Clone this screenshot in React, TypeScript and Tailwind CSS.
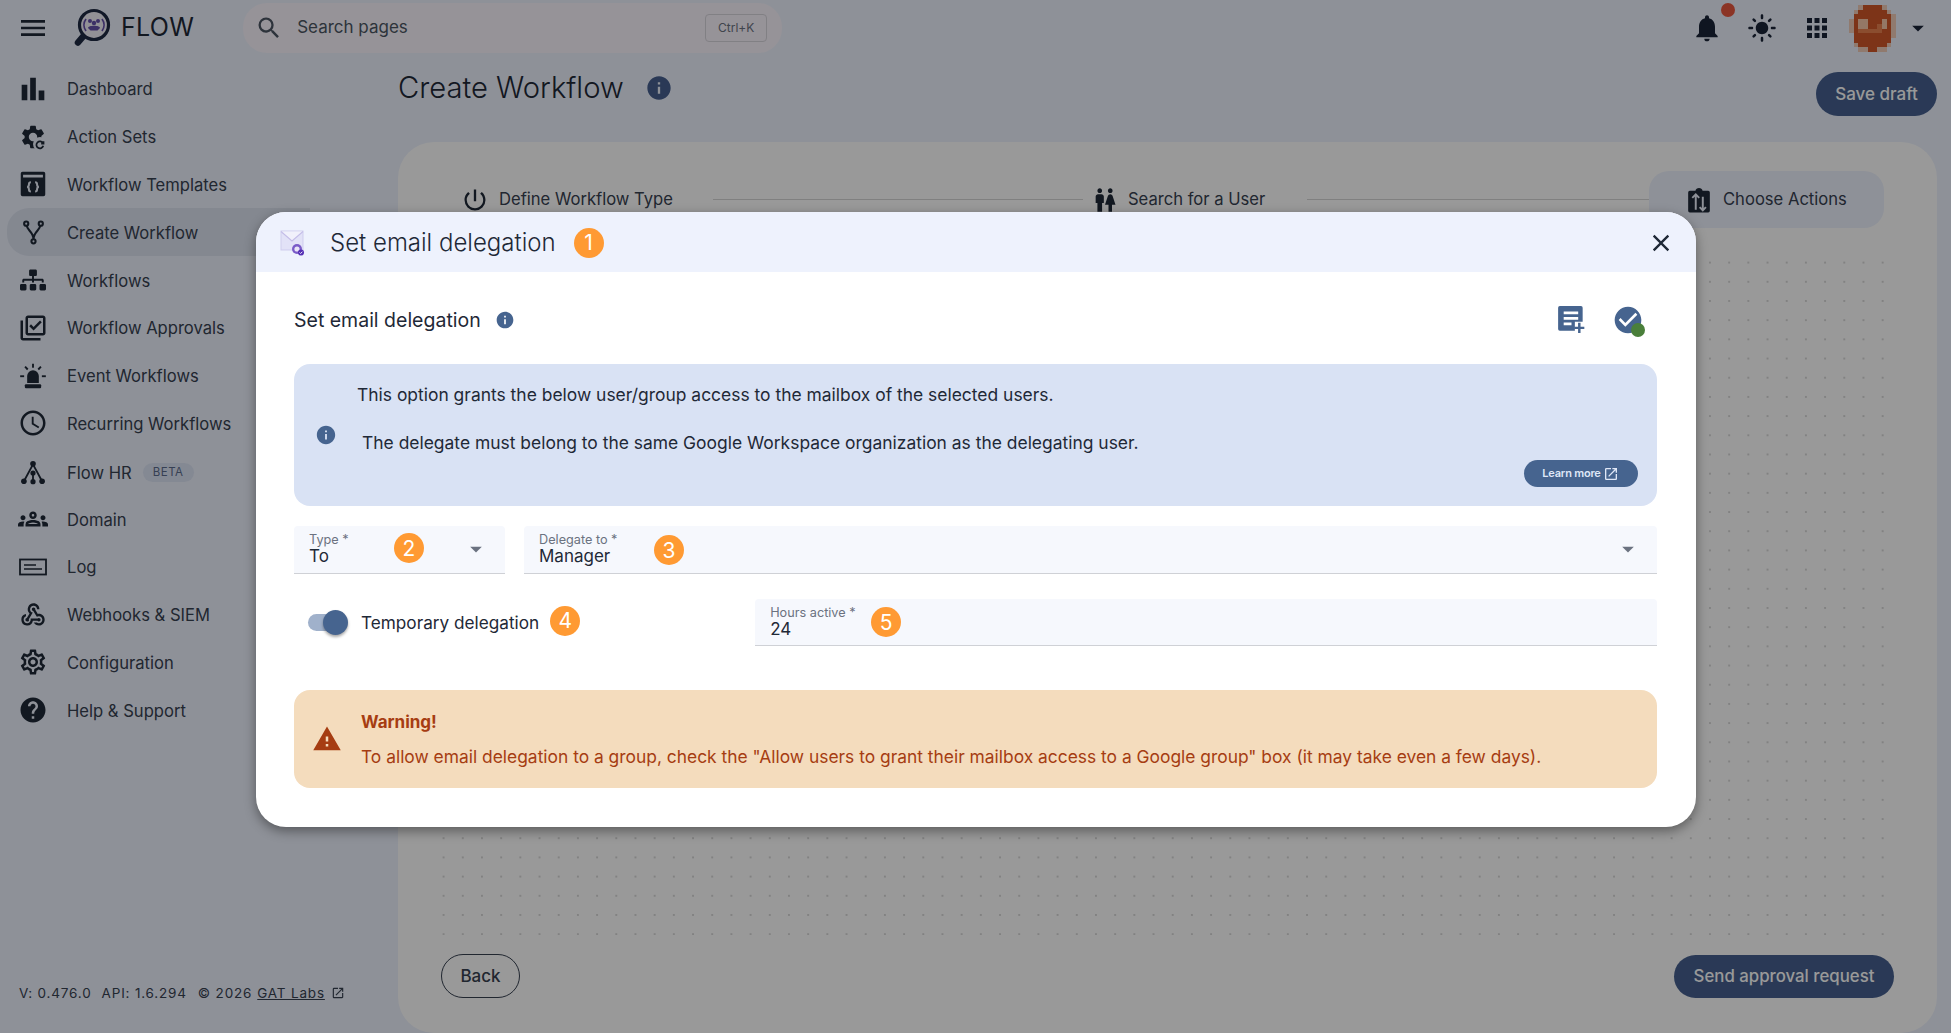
import React from "react";
import {
  MdMenu, MdBarChart, MdOutlineLibraryAddCheck, MdAccessTime, MdOutlineGroups, MdOutlineWebhook, MdOutlineSettings,
  MdHelp, MdOpenInNew, MdPowerSettingsNew, MdWc, MdNotifications, MdLightMode, MdApps, MdArrowDropDown, MdSearch,
  MdClose, MdInfo, MdCheckCircle, MdWarning,
} from "react-icons/md";
import { FaSitemap } from "react-icons/fa";

type IconProps = { className?: string };

const ActionSetsIcon = ({ className }: IconProps) => (
  <svg viewBox="0 0 24 24" className={className} fill="currentColor">
    <path d="M19.14 12.94c.04-.3.06-.61.06-.94s-.02-.64-.07-.94l2.03-1.58a.49.49 0 0 0 .12-.61l-1.92-3.32a.49.49 0 0 0-.59-.22l-2.39.96c-.5-.38-1.03-.7-1.62-.94L14.4 2.81a.48.48 0 0 0-.48-.41h-3.84a.48.48 0 0 0-.47.41l-.36 2.54c-.59.24-1.13.57-1.62.94l-2.39-.96a.48.48 0 0 0-.59.22L2.74 8.87a.47.47 0 0 0 .12.61l2.03 1.58c-.05.3-.09.63-.09.94s.02.64.07.94l-2.03 1.58a.49.49 0 0 0-.12.61l1.92 3.32c.12.22.37.29.59.22l2.39-.96c.5.38 1.03.7 1.62.94l.36 2.54c.05.24.24.41.48.41h3.84c.24 0 .44-.17.47-.41l.36-2.54c.59-.24 1.13-.56 1.62-.94l2.39.96c.22.08.47 0 .59-.22l1.92-3.32a.47.47 0 0 0-.12-.61zM12 15.6A3.6 3.6 0 1 1 12 8.4a3.6 3.6 0 0 1 0 7.2z" />
    <circle cx="18" cy="18" r="6" fill="#edf2fe" />
    <path d="M21 15.6v2h-2M20.6 17.4a3 3 0 1 0 .2 2.2" fill="none" stroke="currentColor" strokeWidth="1.5" />
  </svg>
);

const TemplatesIcon = ({ className }: IconProps) => (
  <svg viewBox="0 0 24 24" className={className} fill="currentColor">
    <path fillRule="evenodd" d="M3 1.5h18A1.5 1.5 0 0 1 22.5 3v18a1.5 1.5 0 0 1-1.5 1.5H3A1.5 1.5 0 0 1 1.5 21V3A1.5 1.5 0 0 1 3 1.5zM3.5 4v2.5h17V4z" />
    <path d="M10.2 10.5c-1.6 0-1.7.8-1.7 2s-.2 2-1.6 2c1.4 0 1.6.8 1.6 2s.1 2 1.7 2M13.8 10.5c1.6 0 1.7.8 1.7 2s.2 2 1.6 2c-1.4 0-1.6.8-1.6 2s-.1 2-1.7 2" fill="none" stroke="#edf2fe" strokeWidth="1.7" />
  </svg>
);

const ForkIcon = ({ className }: IconProps) => (
  <svg viewBox="0 0 24 24" className={className} fill="none" stroke="currentColor" strokeWidth="2">
    <circle cx="5" cy="3.5" r="2" />
    <circle cx="19" cy="3.5" r="2" />
    <circle cx="12" cy="20.5" r="2" />
    <path d="M5.5 5.5c.5 4.5 6.5 6 6.5 13M18.5 5.5c-.5 4.5-6.5 6-6.5 13" />
  </svg>
);

const SirenIcon = ({ className }: IconProps) => (
  <svg viewBox="0 0 24 24" className={className} fill="currentColor">
    <path d="M7 18v-6a5 5 0 0 1 10 0v6z" />
    <rect x="5" y="19" width="14" height="3.4" rx="1" />
    <rect x="11.2" y="1.5" width="1.6" height="3.4" />
    <rect x="1" y="11.4" width="3.4" height="1.6" />
    <rect x="19.6" y="11.4" width="3.4" height="1.6" />
    <path d="M4.6 4.6l1.2-1.1 2.3 2.3-1.2 1.2zM19.4 4.6l-1.2-1.1-2.3 2.3 1.2 1.2z" />
  </svg>
);

const HrIcon = ({ className }: IconProps) => (
  <svg viewBox="0 0 24 24" className={className} fill="currentColor">
    <circle cx="12" cy="3.5" r="2.6" />
    <circle cx="12" cy="12" r="2.4" />
    <circle cx="3.6" cy="19.6" r="2.6" />
    <circle cx="12" cy="20" r="2.4" />
    <circle cx="20.4" cy="19.6" r="2.6" />
    <path d="M12 4L3.6 19.6M12 4l8.4 15.6M12 12v8" fill="none" stroke="currentColor" strokeWidth="1.7" />
  </svg>
);

const LogIcon = ({ className }: IconProps) => (
  <svg viewBox="0 0 28 18" className={className} fill="none" stroke="currentColor" strokeWidth="1.8">
    <rect x="1" y="1.5" width="26" height="15" />
    <path d="M5 7h12M5 11h18" strokeWidth="1.5" />
  </svg>
);

const ChooseActionsIcon = ({ className }: IconProps) => (
  <svg viewBox="0 0 24 24" className={className} fill="currentColor">
    <path d="M3.5 3.5h5.2a3.4 3.4 0 0 1 6.6 0h5.2A1.5 1.5 0 0 1 22 5v17a1.5 1.5 0 0 1-1.5 1.5h-17A1.5 1.5 0 0 1 2 22V5a1.5 1.5 0 0 1 1.5-1.5z" />
    <path d="M9 21V7M5.8 10L9 6.8l3.2 3.2M15.5 9v13M12.6 18.6l2.9 3 2.9-3" fill="none" stroke="#edf2fe" strokeWidth="1.8" />
  </svg>
);

const NoteAddIcon = ({ className }: IconProps) => (
  <svg viewBox="0 0 26 26" className={className}>
    <path fill="#46648f" d="M2.5 1h19A1.5 1.5 0 0 1 23 2.5V15h-7v8H2.5A1.5 1.5 0 0 1 1 21.5v-19A1.5 1.5 0 0 1 2.5 1z" />
    <path d="M6 7h13M6 12h13M6 17h7" stroke="#fff" strokeWidth="2.4" />
    <path d="M20 16v9M15.5 20.5h9" stroke="#46648f" strokeWidth="2.2" />
  </svg>
);

const MailIcon = ({ className }: IconProps) => (
  <svg viewBox="0 0 26 28" className={className}>
    <rect x="1" y="2" width="22" height="19" fill="#e2e2f7" stroke="#cfcdee" />
    <path d="M1 2.5l11 9.5 11-9.5" fill="#f1f1fb" stroke="#c4bde8" strokeWidth="1.1" />
    <circle cx="17" cy="20" r="5" fill="#7a5bc8" />
    <circle cx="17" cy="20" r="2.6" fill="#e9e4f8" />
    <circle cx="21" cy="23.5" r="3" fill="#5530b5" />
    <path d="M19.6 23.5l1 1 1.8-1.8" stroke="#fff" fill="none" strokeWidth="0.9" />
  </svg>
);

const FlowLogo = ({ className }: IconProps) => (
  <svg viewBox="0 0 40 40" className={className}>
    <path d="M10.5 28L5 34.5" stroke="#1f2a44" strokeWidth="6.5" strokeLinecap="round" />
    <circle cx="21" cy="17" r="14.5" fill="#f4f2fa" stroke="#1f2a44" strokeWidth="3.2" />
    <path d="M13 11a10 10 0 0 0 0 12M29 11a10 10 0 0 1 0 12" stroke="#6550ab" strokeWidth="1.8" fill="none" />
    <circle cx="17" cy="13" r="2" fill="#6550ab" />
    <circle cx="25" cy="13" r="2" fill="#6550ab" />
    <circle cx="21" cy="15" r="2.2" fill="#6550ab" />
    <path d="M15 20c0-3 12-3 12 0l-2.5 2.5h-7z" fill="#6550ab" />
  </svg>
);

const avatarRows = [
  "..eMMMMe..",
  ".eMMMMMMe.",
  ".MMMMMMMMe",
  "eMLLMMMLMe",
  "eMLLMMlLMe",
  "eMlllllMMe",
  ".MMMMMMMMe",
  ".MMMMMMMM.",
  ".eMMMMMMe.",
  "..eeMMee..",
];
const avatarColours: Record<string, string> = { e: "#f0cbb8", M: "#d05828", L: "#f7c9ab", l: "#e8814f" };

const Avatar = () => (
  <svg viewBox="0 0 10 10" className="h-[47px] w-[47px]" shapeRendering="crispEdges">
    {avatarRows.flatMap((row, y) =>
      row.split("").map((c, x) => (c === "." ? null : <rect key={`${x}-${y}`} x={x} y={y} width="1" height="1" fill={avatarColours[c]} />)),
    )}
  </svg>
);

const navItems: { label: string; icon: React.ReactNode; active?: boolean; beta?: boolean }[] = [
  { label: "Dashboard", icon: <MdBarChart className="h-[34px] w-[34px]" /> },
  { label: "Action Sets", icon: <ActionSetsIcon className="h-7 w-7" /> },
  { label: "Workflow Templates", icon: <TemplatesIcon className="h-7 w-7" /> },
  { label: "Create Workflow", icon: <ForkIcon className="h-[25px] w-[25px]" />, active: true },
  { label: "Workflows", icon: <FaSitemap className="h-[24px] w-[26px]" /> },
  { label: "Workflow Approvals", icon: <MdOutlineLibraryAddCheck className="h-[30px] w-[30px]" /> },
  { label: "Event Workflows", icon: <SirenIcon className="h-7 w-7" /> },
  { label: "Recurring Workflows", icon: <MdAccessTime className="h-[30px] w-[30px]" /> },
  { label: "Flow HR", icon: <HrIcon className="h-[26px] w-[28px]" />, beta: true },
  { label: "Domain", icon: <MdOutlineGroups className="h-[30px] w-[30px]" /> },
  { label: "Log", icon: <LogIcon className="h-[18px] w-7" /> },
  { label: "Webhooks & SIEM", icon: <MdOutlineWebhook className="h-7 w-7" /> },
  { label: "Configuration", icon: <MdOutlineSettings className="h-[30px] w-[30px]" /> },
  { label: "Help & Support", icon: <MdHelp className="h-[30px] w-[30px]" /> },
];

const Badge = ({ n, className }: { n: number; className?: string }) => (
  <span className={`flex h-[30px] w-[30px] shrink-0 items-center justify-center rounded-full bg-[#ff9a33] text-[21px] leading-none text-white ${className ?? ""}`}>{n}</span>
);

const Field = ({ label, value, badge, badgeClass, arrow, className }: { label: string; value: string; badge: number; badgeClass: string; arrow?: boolean; className: string }) => (
  <div className={`relative h-12 rounded-t border-b border-[#cfd1d6] bg-[#f6f8fd] pl-[15px] ${className}`}>
    <div className="pt-[6px] text-[12.7px] leading-[16px] text-[#6b7280]">{label}</div>
    <div className="text-[17px] leading-[17px] text-[#1f2937]">{value}</div>
    <Badge n={badge} className={`absolute ${badgeClass}`} />
    {arrow && <MdArrowDropDown className="absolute right-[15px] top-[9px] h-7 w-7 text-[#6b7280]" />}
  </div>
);

export default function App() {
  return (
    <div className="relative flex h-[1033px] w-[1951px] flex-col overflow-hidden bg-[#edf2fe] font-[family-name:Inter,sans-serif] text-[#1f2937]">
      <header className="flex h-[56px] shrink-0 items-center">
        <MdMenu className="ml-[17px] h-8 w-8" />
        <FlowLogo className="ml-[24px] h-[40px] w-[40px]" />
        <span className="ml-[8px] text-[25px] tracking-[0.3px]">FLOW</span>
        <div className="ml-[49px] flex h-[50px] w-[539px] items-center rounded-[24px] bg-[#faf5fe] pl-[12px] pr-[15px]">
          <MdSearch className="h-7 w-7 text-[#4b5563]" />
          <span className="ml-[14px] flex-1 text-[17px] text-[#4b5563]">Search pages</span>
          <span className="flex h-[28px] w-[62px] items-center justify-center rounded border border-[#d8d6dc] text-[12px] text-[#6b7280]">Ctrl+K</span>
        </div>
        <div className="ml-auto flex items-center pr-[19px]">
          <div className="relative">
            <MdNotifications className="h-[32px] w-[32px] text-[#1a2438]" />
            <span className="absolute -right-[12px] -top-[9px] h-[14px] w-[14px] rounded-full bg-[#e8573f]" />
          </div>
          <MdLightMode className="ml-[24px] h-[30px] w-[30px] text-[#1a2438]" />
          <MdApps className="ml-[25px] h-[30px] w-[30px] text-[#1a2438]" />
          <div className="ml-[17px]">
            <Avatar />
          </div>
          <MdArrowDropDown className="ml-[8px] h-7 w-7 text-[#1a2438]" />
        </div>
      </header>

      <div className="flex min-h-0 flex-1">
        <aside className="flex w-[398px] shrink-0 flex-col pt-[9px]">
          <nav className="flex flex-col">
            {navItems.map((item) => (
              <div key={item.label} className={`ml-[7px] mr-[88px] flex h-[47.8px] items-center rounded-l-[22px] ${item.active ? "bg-[#dce3f1]" : ""} ${item.beta ? "pt-[3px]" : ""}`}>
                <span className="flex w-[60px] shrink-0 justify-center pr-[8px]">{item.icon}</span>
                <span className="translate-y-px text-[16.6px] text-[#374151]">{item.label}</span>
                {item.beta && <span className="ml-[11px] rounded-full bg-[#dde5f5] px-[10px] text-[11.5px] leading-[19px] tracking-[0.5px] text-[#5b6b8c]">BETA</span>}
              </div>
            ))}
          </nav>
          <div className="mt-auto flex items-center pb-[31px] pl-[19px] text-[13.5px] leading-[18px] tracking-[0.82px] text-[#374151]">
            <span>V: 0.476.0</span>
            <span className="ml-[10px]">API: 1.6.294</span>
            <span className="ml-[11px]">© 2026</span>
            <span className="ml-[5px] underline">GAT Labs</span>
            <MdOpenInNew className="ml-[6px] h-[14px] w-[14px]" />
          </div>
        </aside>

        <main className="flex min-w-0 flex-1 flex-col pr-[14px]">
          <div className="flex h-[86px] shrink-0 items-start justify-between">
            <div className="flex items-center pt-[14px]">
              <h1 className="text-[29.2px] font-light leading-[36px] text-[#1f2937]">Create Workflow</h1>
              <MdInfo className="ml-[21px] h-7 w-7 text-[#46608f]" />
            </div>
            <button className="mt-[16px] h-[44px] w-[121px] rounded-full bg-[#46608f] pt-px text-[17px] font-medium text-white">Save draft</button>
          </div>

          <section className="flex min-h-0 flex-1 flex-col rounded-[36px] bg-white pt-[29px]">
            <div className="flex h-[57px] shrink-0 items-center pl-[63px] pr-[53px]">
              <MdPowerSettingsNew className="h-[28px] w-[28px]" />
              <span className="ml-[10px] text-[16.6px] text-[#374151]">Define Workflow Type</span>
              <div className="ml-[40px] mr-[8px] h-px w-[370px] bg-[#d6d6d6]" />
              <MdWc className="h-7 w-7" />
              <span className="ml-[9px] text-[16.6px] text-[#374151]">Search for a User</span>
              <div className="ml-[42px] h-px flex-1 bg-[#d6d6d6]" />
              <div className="flex h-[57px] w-[235px] items-center rounded-[20px] bg-[#edf2fe] pl-[37px]">
                <ChooseActionsIcon className="h-[26px] w-[26px]" />
                <span className="ml-[11px] text-[16.6px] text-[#374151]">Choose Actions</span>
              </div>
            </div>
            <div className="mb-[9px] ml-[36px] mr-[43px] mt-[24.7px] min-h-0 flex-1 bg-[radial-gradient(circle,#b0b0b0_0.55px,transparent_0.8px)] bg-[length:19.2px_19.2px]" />
            <div className="flex h-[89px] shrink-0 items-start justify-between pl-[43px] pr-[43px] pt-[10px]">
              <button className="h-[44px] w-[79px] rounded-full border-[1.5px] border-[#374151] pt-px text-[17px] font-medium text-[#374151]">Back</button>
              <button className="mt-px h-[43px] w-[220px] rounded-full bg-[#46608f] text-[16.8px] font-medium text-white">Send approval request</button>
            </div>
          </section>
        </main>
      </div>

      <div className="absolute inset-0 bg-black/40" />

      <div className="absolute inset-0 flex items-start justify-center pl-px pt-[212px]">
        <div className="h-[615px] w-[1440px] overflow-hidden rounded-[30px] bg-white shadow-[0_4px_12px_rgba(0,0,0,0.4)]">
          <div className="flex h-[60px] items-center bg-[#eef2fd] pl-[24px] pr-[21px] pt-px">
            <MailIcon className="h-[28px] w-[26px]" />
            <span className="ml-[24px] text-[24px] font-light text-[#1f2937]">Set email delegation</span>
            <Badge n={1} className="ml-[18px]" />
            <MdClose className="ml-auto h-7 w-7 text-[#1f2937]" />
          </div>

          <div className="flex flex-col pl-[38px] pr-[39.5px]">
            <div className="flex h-[92px] items-center pt-[3px]">
              <span className="translate-y-px text-[19.5px] text-[#1f2937]">Set email delegation</span>
              <MdInfo className="ml-[14px] h-5 w-5 text-[#46648f]" />
              <NoteAddIcon className="ml-auto mr-[-1px] h-[29px] w-[29px]" />
              <div className="relative ml-[27px] mr-[13px]">
                <MdCheckCircle className="h-8 w-8 text-[#46648f]" />
                <span className="absolute -bottom-[1px] -right-[1px] h-[14px] w-[14px] rounded-full bg-[#4a7f3a]" />
              </div>
            </div>

            <div className="relative flex h-[142px] items-center rounded-[16px] bg-[#d9e2f4] pl-[21px]">
              <MdInfo className="h-[22px] w-[22px] text-[#46648f]" />
              <div className="ml-[20px] flex flex-col pt-[2px]">
                <p className="-mt-[34px] text-[17.44px] leading-[24px] text-[#1f2937]">This option grants the below user/group access to the mailbox of the selected users.</p>
                <p className="ml-[5px] mt-[24px] text-[17.44px] leading-[24px] text-[#1f2937]">The delegate must belong to the same Google Workspace organization as the delegating user.</p>
              </div>
              <button className="absolute bottom-[19px] right-[19px] flex h-[27px] w-[114px] items-center justify-center rounded-full bg-[#46648f] text-[11px] font-semibold tracking-[-0.2px] text-[#dfe7f7]">
                Learn more
                <MdOpenInNew className="ml-[2px] h-[16px] w-[16px]" />
              </button>
            </div>

            <div className="mt-[20px] flex gap-[19px]">
              <Field label="Type *" value="To" badge={2} badgeClass="left-[100px] top-[7px]" arrow className="w-[211px]" />
              <Field label="Delegate to *" value="Manager" badge={3} badgeClass="left-[130px] top-[9px]" arrow className="flex-1" />
            </div>

            <div className="mt-[25px] flex items-center">
              <div className="relative ml-[14px] h-[17px] w-[37px] rounded-full bg-[#a0b1cb]">
                <span className="absolute -right-[3px] -top-[4px] h-[25px] w-[25px] rounded-full bg-[#46648f] shadow-[0_2px_3px_rgba(0,0,0,0.35)]" />
              </div>
              <span className="ml-[16px] text-[17.2px] text-[#1f2937]">Temporary delegation</span>
              <Badge n={4} className="-mt-[4px] ml-[11px]" />
              <Field label="Hours active *" value="24" badge={5} badgeClass="left-[116px] top-[8px]" className="ml-[175px] h-[47px] flex-1" />
            </div>

            <div className="mt-[44px] flex h-[98px] items-center rounded-[16px] bg-[#f4dcbd] pl-[18px] text-[#a63d12]">
              <MdWarning className="h-[30px] w-[30px]" />
              <div className="ml-[19px] flex flex-col">
                <span className="text-[17px] font-bold leading-[24px]">Warning!</span>
                <span className="mt-[11px] text-[17.4px] leading-[24px]">To allow email delegation to a group, check the "Allow users to grant their mailbox access to a Google group" box (it may take even a few days).</span>
              </div>
            </div>
          </div>
        </div>
      </div>
    </div>
  );
}
